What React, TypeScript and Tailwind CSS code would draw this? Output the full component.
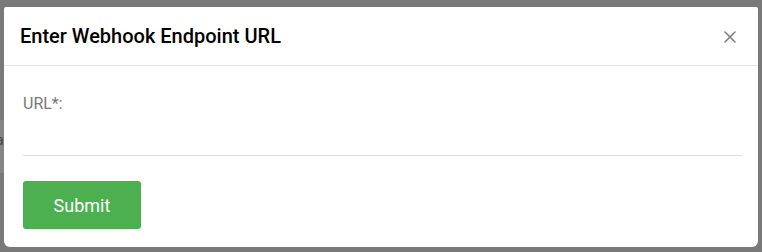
import React from "react";

export default function App() {
  return (
    <div className="relative w-[762px] h-[252px] overflow-hidden bg-[#797979]" style={{ fontFamily: "Roboto, 'Liberation Sans', sans-serif" }}>
      <div className="absolute left-0 top-[120px] w-[4px] h-[53px] bg-[#858585] overflow-hidden">
        <span className="absolute left-[-4px] top-[12px] text-[14px] leading-[16px] text-[#444]">a</span>
      </div>
      <div className="absolute left-[4px] top-[7px] w-[754px] h-[240px] bg-white rounded-t-[2px] rounded-b-[6px] flex flex-col">
        <div className="h-[59px] border-b border-[#e5e5e5] flex items-center justify-between pl-[16px] pr-[22px]">
          <h2 className="text-[20px] font-medium text-black leading-none">Enter Webhook Endpoint URL</h2>
          <svg width="12" height="12" viewBox="0 0 12 12" className="mt-[1px]">
            <path d="M1 1 L11 11 M11 1 L1 11" stroke="#7a7a7a" strokeWidth="1.5" strokeLinecap="round" />
          </svg>
        </div>
        <div className="px-[19px] pt-[28px] flex flex-col">
          <label className="text-[16px] text-[#777] leading-[20px]">URL*:</label>
          <div className="mt-[41px] mr-[-3px] border-b border-[#dddddd]" />
          <div className="mt-[25px]">
            <button className="w-[118px] h-[48px] rounded-[3px] bg-[#4caf50] text-white text-[18px]">Submit</button>
          </div>
        </div>
      </div>
    </div>
  );
}
